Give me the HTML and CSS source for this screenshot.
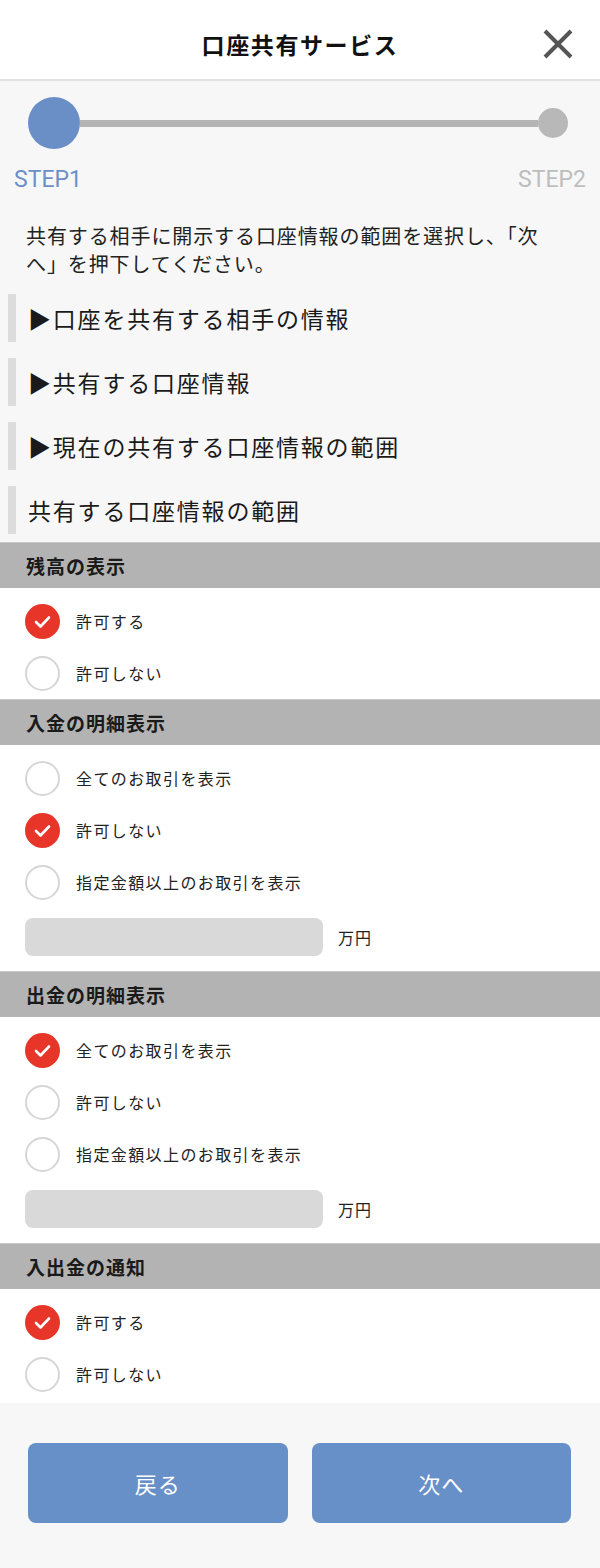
FILE: index.html
```html
<!DOCTYPE html>
<html lang="ja">
<head>
<meta charset="utf-8">
<title>口座共有サービス</title>
<link rel="stylesheet" href="styles.css">
</head>
<body>
<header class="topbar">
  <div></div>
  <h1 class="title">口座共有サービス</h1>
  <button class="close" aria-label="閉じる">
    <svg width="30" height="30" viewBox="0 0 30 30"><path d="M2 2 L28 28 M28 2 L2 28" stroke="#555" stroke-width="4" fill="none"/></svg>
  </button>
</header>

<section class="stepper">
  <div class="track">
    <span class="dot-active"></span>
    <span class="line"></span>
    <span class="dot"></span>
  </div>
</section>
<div class="step-labels">
  <span class="lbl active">STEP1</span>
  <span class="lbl">STEP2</span>
</div>

<p class="intro">共有する相手に開示する口座情報の範囲を選択し、「次へ」を押下してください。</p>

<div class="headings">
  <div class="heading">▶口座を共有する相手の情報</div>
  <div class="heading">▶共有する口座情報</div>
  <div class="heading">▶現在の共有する口座情報の範囲</div>
  <div class="heading">共有する口座情報の範囲</div>
</div>

<div class="sections">
  <section class="sec">
    <div class="sec-head">残高の表示</div>
    <div class="sec-body">
      <div class="row"><span class="radio on"><svg width="35" height="35" viewBox="0 0 35 35"><path d="M11 18 L15.5 22.5 L24 13.5" stroke="#fff" stroke-width="2.6" fill="none" stroke-linecap="round" stroke-linejoin="round"/></svg></span><span class="txt">許可する</span></div>
      <div class="row"><span class="radio"></span><span class="txt">許可しない</span></div>
    </div>
  </section>

  <section class="sec">
    <div class="sec-head">入金の明細表示</div>
    <div class="sec-body">
      <div class="row"><span class="radio"></span><span class="txt">全てのお取引を表示</span></div>
      <div class="row"><span class="radio on"><svg width="35" height="35" viewBox="0 0 35 35"><path d="M11 18 L15.5 22.5 L24 13.5" stroke="#fff" stroke-width="2.6" fill="none" stroke-linecap="round" stroke-linejoin="round"/></svg></span><span class="txt">許可しない</span></div>
      <div class="row"><span class="radio"></span><span class="txt">指定金額以上のお取引を表示</span></div>
      <div class="amount"><span class="field"></span><span class="unit">万円</span></div>
    </div>
  </section>

  <section class="sec">
    <div class="sec-head">出金の明細表示</div>
    <div class="sec-body">
      <div class="row"><span class="radio on"><svg width="35" height="35" viewBox="0 0 35 35"><path d="M11 18 L15.5 22.5 L24 13.5" stroke="#fff" stroke-width="2.6" fill="none" stroke-linecap="round" stroke-linejoin="round"/></svg></span><span class="txt">全てのお取引を表示</span></div>
      <div class="row"><span class="radio"></span><span class="txt">許可しない</span></div>
      <div class="row"><span class="radio"></span><span class="txt">指定金額以上のお取引を表示</span></div>
      <div class="amount"><span class="field"></span><span class="unit">万円</span></div>
    </div>
  </section>

  <section class="sec">
    <div class="sec-head">入出金の通知</div>
    <div class="sec-body last">
      <div class="row"><span class="radio on"><svg width="35" height="35" viewBox="0 0 35 35"><path d="M11 18 L15.5 22.5 L24 13.5" stroke="#fff" stroke-width="2.6" fill="none" stroke-linecap="round" stroke-linejoin="round"/></svg></span><span class="txt">許可する</span></div>
      <div class="row"><span class="radio"></span><span class="txt">許可しない</span></div>
    </div>
  </section>
</div>

<footer class="actions">
  <button class="btn">戻る</button>
  <button class="btn">次へ</button>
</footer>
</body>
</html>
```

FILE: styles.css
```css
* { box-sizing: border-box; }
html, body { margin: 0; padding: 0; }
body {
  background: #f7f7f7;
  font-family: "Noto Sans CJK JP", "Noto Sans", sans-serif;
  color: #222;
  width: 600px;
}

.topbar {
  height: 81px;
  padding-top: 9px;
  background: #fff;
  border-bottom: 2px solid #e2e2e2;
  display: grid;
  grid-template-columns: 1fr auto 1fr;
  align-items: center;
}
.title {
  margin: 0;
  font-size: 23px;
  font-weight: 700;
  letter-spacing: 1.6px;
  color: #111;
  line-height: 1;
}
.close {
  justify-self: end;
  margin-right: 27px;
  border: 0;
  background: none;
  padding: 0;
  width: 30px;
  height: 30px;
  display: flex;
}

.stepper { padding: 16px 32px 0 28px; }
.track {
  display: flex;
  align-items: center;
  height: 52px;
}
.dot-active {
  width: 52px;
  height: 52px;
  border-radius: 50%;
  background: #6a8fc7;
  flex: none;
}
.line {
  flex: 1;
  height: 7px;
  background: #b4b4b4;
}
.dot {
  width: 30px;
  height: 30px;
  border-radius: 50%;
  background: #b8b8b8;
  flex: none;
}
.step-labels {
  display: flex;
  justify-content: space-between;
  padding: 0 14px;
  margin-top: 19px;
  font-family: Roboto, "Liberation Sans", sans-serif;
  font-size: 23px;
  line-height: 24px;
  color: #bdbdbd;
}
.step-labels .active { color: #6b90c8; }

.intro {
  margin: 30px 50px 0 26px;
  font-size: 20px;
  line-height: 28px;
  letter-spacing: 0.9px;
  color: #222;
}

.headings {
  margin-top: 16px;
  padding-left: 8px;
  display: flex;
  flex-direction: column;
  gap: 16px;
}
.heading {
  height: 48px;
  border-left: 8px solid #dcdcdc;
  padding-left: 12px;
  display: flex;
  align-items: center;
  font-size: 23px;
  letter-spacing: 1.8px;
  color: #1a1a1a;
}

.sections { margin-top: 8px; }
.sec-head {
  height: 46px;
  background: #b3b3b3;
  border-top: 1px solid #c8c8c8;
  padding-left: 26px;
  display: flex;
  align-items: center;
  font-size: 19px;
  font-weight: 700;
  letter-spacing: 1px;
  color: #1a1a1a;
}
.sec-body {
  background: #fff;
  padding-top: 7px;
}
.sec-body.last { padding-bottom: 3px; }
.row {
  height: 52px;
  display: flex;
  align-items: center;
  padding-left: 25px;
  gap: 16px;
}
.radio {
  width: 35px;
  height: 35px;
  border-radius: 50%;
  border: 2px solid #d6d6d6;
  background: #fff;
  flex: none;
  display: flex;
}
.radio.on {
  border: 0;
  background: #e8352a;
}
.txt {
  font-size: 16px;
  letter-spacing: 1.4px;
  color: #222;
}
.amount {
  display: flex;
  align-items: center;
  padding: 10px 0 15px 25px;
  gap: 15px;
}
.field {
  width: 298px;
  height: 38px;
  border-radius: 8px;
  background: #d9d9d9;
}
.unit {
  font-size: 16px;
  letter-spacing: 1px;
  color: #222;
}

.actions {
  display: flex;
  gap: 24px;
  padding: 40px 29px 45px 28px;
}
.btn {
  flex: 1;
  height: 80px;
  border: 0;
  border-radius: 8px;
  background: #6890c8;
  color: #fff;
  font-family: "Noto Sans CJK JP", sans-serif;
  font-size: 22px;
  letter-spacing: 1px;
}
```
